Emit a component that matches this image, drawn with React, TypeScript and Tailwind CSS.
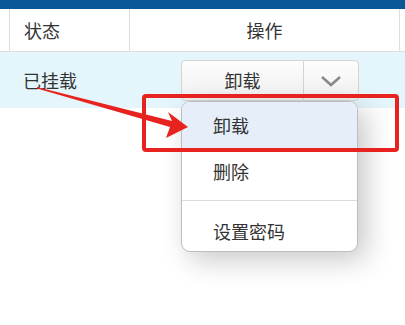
import React from "react";

export default function App() {
  const font = { fontFamily: '"Noto Sans CJK SC", "Noto Sans", sans-serif' };
  return (
    <div className="relative w-[405px] h-[325px] bg-white overflow-hidden text-[#333]" style={font}>
      <div className="h-[9px] bg-[#0b5898]" />
      <div className="flex h-[43px] border-b border-[#dedede] text-[18px]">
        <div className="w-[10px] border-r border-[#dedede]" />
        <div className="w-[120px] border-r border-[#dedede] flex items-center pl-[14px]">状态</div>
        <div className="w-[270px] border-r border-[#dedede] flex items-center justify-center">操作</div>
        <div className="flex-1" />
      </div>
      <div className="flex h-[56px] bg-[#e4f6fc] text-[18px]">
        <div className="w-[130px] flex items-center pl-[23px]">已挂载</div>
        <div className="pl-[51px] pt-[8px]">
          <div className="flex w-[178px] h-[41px] rounded-[4px] border border-[#d4d4d4] bg-gradient-to-b from-[#fdfdfd] to-[#f0f0f0]">
            <div className="w-[122px] flex items-center justify-center border-r border-[#d4d4d4]">卸载</div>
            <div className="flex-1 flex items-center justify-center">
              <svg width="22" height="12" viewBox="0 0 22 12">
                <path d="M2 2 L11 10 L20 2" fill="none" stroke="#8a8a8a" strokeWidth="2.6" />
              </svg>
            </div>
          </div>
        </div>
      </div>

      <div className="absolute left-[181px] top-[101px] w-[177px] h-[151px] rounded-[9px] border border-[#bdbdbd] bg-white shadow-[8px_8px_28px_rgba(0,0,0,0.22)] overflow-hidden text-[18px]">
        <div className="h-[47px] bg-[#e6eef9] flex items-center pl-[31px]">卸载</div>
        <div className="h-[45px] flex items-center pl-[31px]">删除</div>
        <div className="h-px bg-[#dcdcdc] mt-[6px]" />
        <div className="h-[50px] flex items-center pl-[31px] pt-[10px]">设置密码</div>
      </div>

      <div className="absolute left-[142px] top-[94px] w-[257px] h-[58px] rounded-[4px] border-[4px] border-[#e8231f]" />

      <svg className="absolute left-0 top-0" width="405" height="325" viewBox="0 0 405 325">
        <polygon points="37,87 172,121 168,112 188,127 166,138 170,127 37,88.5" fill="#e8231f" />
      </svg>
    </div>
  );
}
